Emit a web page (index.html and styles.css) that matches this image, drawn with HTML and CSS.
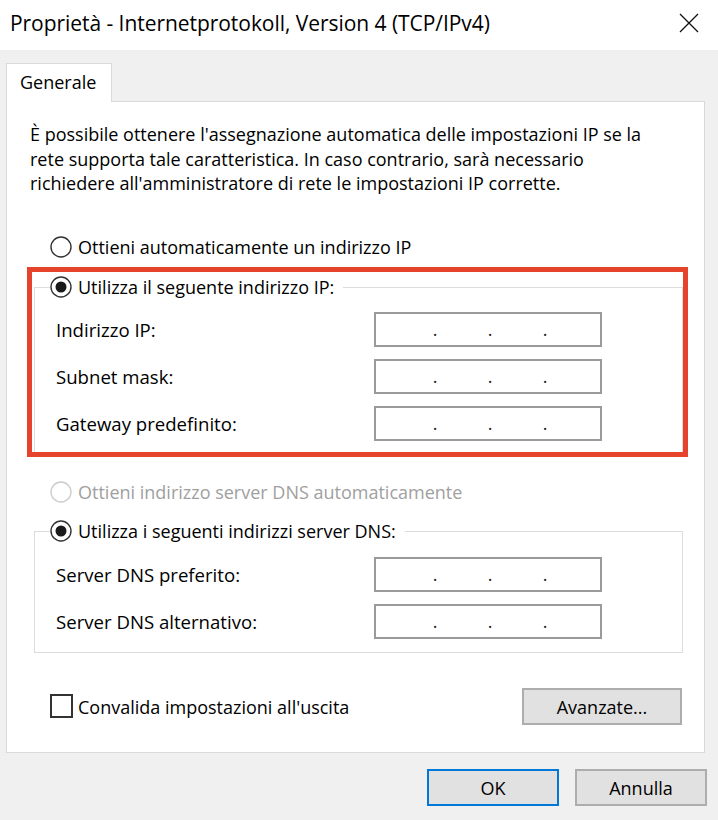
FILE: index.html
```html
<!DOCTYPE html>
<html lang="it">
<head>
<meta charset="utf-8">
<title>Proprietà - Internetprotokoll, Version 4 (TCP/IPv4)</title>
<link rel="stylesheet" href="styles.css">
</head>
<body>
<div class="window">
  <div class="titlebar">
    <span class="title">Proprietà - Internetprotokoll, Version 4 (TCP/IPv4)</span>
    <svg class="close" width="20" height="20" viewBox="0 0 20 20"><path d="M1 1 L19 19 M19 1 L1 19" stroke="#111" stroke-width="1.3" fill="none"/></svg>
  </div>
  <div class="body">
    <div class="tabs"><div class="tab">Generale</div></div>
    <div class="panel">
      <p class="intro">È possibile ottenere l'assegnazione automatica delle impostazioni IP se la<br>rete supporta tale caratteristica. In caso contrario, sarà necessario<br>richiedere all'amministratore di rete le impostazioni IP corrette.</p>

      <div class="radio-row">
        <svg class="radio" width="22" height="22" viewBox="0 0 22 22"><circle cx="11" cy="11" r="10" fill="#fff" stroke="#333" stroke-width="1.4"/></svg>
        <span>Ottieni automaticamente un indirizzo IP</span>
      </div>

      <fieldset class="group">
        <legend class="radio-row legend">
          <svg class="radio" width="22" height="22" viewBox="0 0 22 22"><circle cx="11" cy="11" r="10" fill="#fff" stroke="#333" stroke-width="1.4"/><circle cx="11" cy="11" r="5.5" fill="#1a1a1a"/></svg>
          <span>Utilizza il seguente indirizzo IP:</span>
        </legend>
        <div class="fields">
          <span class="label">Indirizzo IP:</span>
          <div class="ip"><span class="seg"></span><span class="dot">.</span><span class="seg"></span><span class="dot">.</span><span class="seg"></span><span class="dot">.</span><span class="seg"></span></div>
          <span class="label">Subnet mask:</span>
          <div class="ip"><span class="seg"></span><span class="dot">.</span><span class="seg"></span><span class="dot">.</span><span class="seg"></span><span class="dot">.</span><span class="seg"></span></div>
          <span class="label">Gateway predefinito:</span>
          <div class="ip"><span class="seg"></span><span class="dot">.</span><span class="seg"></span><span class="dot">.</span><span class="seg"></span><span class="dot">.</span><span class="seg"></span></div>
        </div>
      </fieldset>

      <div class="radio-row disabled first-dns">
        <svg class="radio" width="22" height="22" viewBox="0 0 22 22"><circle cx="11" cy="11" r="10" fill="#fff" stroke="#cccccc" stroke-width="1.4"/></svg>
        <span>Ottieni indirizzo server DNS automaticamente</span>
      </div>

      <fieldset class="group dns">
        <legend class="radio-row legend">
          <svg class="radio" width="22" height="22" viewBox="0 0 22 22"><circle cx="11" cy="11" r="10" fill="#fff" stroke="#333" stroke-width="1.4"/><circle cx="11" cy="11" r="5.5" fill="#1a1a1a"/></svg>
          <span>Utilizza i seguenti indirizzi server DNS:</span>
        </legend>
        <div class="fields">
          <span class="label">Server DNS preferito:</span>
          <div class="ip"><span class="seg"></span><span class="dot">.</span><span class="seg"></span><span class="dot">.</span><span class="seg"></span><span class="dot">.</span><span class="seg"></span></div>
          <span class="label">Server DNS alternativo:</span>
          <div class="ip"><span class="seg"></span><span class="dot">.</span><span class="seg"></span><span class="dot">.</span><span class="seg"></span><span class="dot">.</span><span class="seg"></span></div>
        </div>
      </fieldset>

      <div class="bottom-row">
        <label class="check"><span class="box"></span><span>Convalida impostazioni all'uscita</span></label>
        <button class="btn advanced">Avanzate...</button>
      </div>

      <div class="highlight"></div>
    </div>
    <div class="footer">
      <button class="btn ok">OK</button>
      <button class="btn">Annulla</button>
    </div>
  </div>
</div>
</body>
</html>
```
FILE: styles.css
```css
* { box-sizing: border-box; }
html, body { margin: 0; padding: 0; }
body {
  width: 718px;
  height: 820px;
  overflow: hidden;
  background: #f0f0f0;
  font-family: "Open Sans", "Noto Sans", sans-serif;
  font-size: 18px;
  color: #000;
}
.window { width: 718px; height: 820px; }
.titlebar {
  height: 50px;
  background: #fff;
  display: flex;
  align-items: center;
  justify-content: space-between;
  padding: 0 19px 5px 10px;
}
.title { font-size: 21px; letter-spacing: -0.05px; }
.close { display: block; margin-top: 1px; }
.body { padding: 13px 0 0 0; }
.tabs { display: flex; padding-left: 6px; }
.tab {
  position: relative;
  z-index: 1;
  width: 106px;
  height: 39px;
  margin-bottom: -1px;
  background: #fff;
  border: 1px solid #d9d9d9;
  border-bottom: none;
  padding: 4px 0 0 13px;
  line-height: 28px;
}
.panel {
  position: relative;
  margin: 0 13px 0 6px;
  height: 652px;
  background: #fff;
  border: 1px solid #d9d9d9;
  padding: 20px 21px 0 23px;
}
.intro {
  margin: 0;
  line-height: 24.5px;
  white-space: nowrap;
}
.radio-row {
  display: flex;
  align-items: center;
  height: 24px;
  margin: 39.5px 0 0 20px;
  white-space: nowrap;
}
.radio { display: block; flex: none; margin-right: 6px; }
.disabled { color: #a0a0a0; }
.group {
  margin: 16px 0 0 4px;
  padding: 0;
  border: 1px solid #dcdcdc;
  min-width: 0;
}
.legend {
  margin: 0 0 0 15px;
  padding: 0 9px 0 0;
}
.fields {
  display: grid;
  grid-template-columns: 318px 228px;
  row-gap: 12px;
  align-items: center;
  padding: 13px 0 12px 21px;
}
.dns .fields { padding: 14px 0 13px 21px; }
.first-dns { margin-top: 26px; }
.group.dns { margin-top: 15px; }
.label { white-space: nowrap; font-size: 18.6px; }
.ip {
  height: 35px;
  border: 2px solid #9a9a9a;
  background: #fff;
  display: flex;
  padding-left: 9px;
  line-height: 31px;
}
.seg { width: 45px; }
.dot { width: 10px; text-align: center; color: #222; }
.bottom-row {
  display: flex;
  align-items: center;
  justify-content: space-between;
  margin: 35px 1px 0 20px;
}
.check { display: flex; align-items: center; white-space: nowrap; }
.box {
  width: 23px;
  height: 24px;
  border: 2px solid #333;
  background: #fff;
  margin: -2px 5px 0 0;
}
.btn {
  font-family: inherit;
  font-size: 18px;
  color: #000;
  background: #e1e1e1;
  border: 2px solid #adadad;
  height: 37px;
  width: 132px;
  padding: 0;
  margin: 0;
}
.advanced { width: 160px; }
.ok { border-color: #0078d7; }
.footer {
  display: flex;
  justify-content: flex-end;
  gap: 16px;
  padding: 16px 11px 0 0;
}
.highlight {
  position: absolute;
  left: 20px;
  top: 165px;
  width: 661px;
  height: 190px;
  border: 5px solid #e6432d;
  pointer-events: none;
}
```
